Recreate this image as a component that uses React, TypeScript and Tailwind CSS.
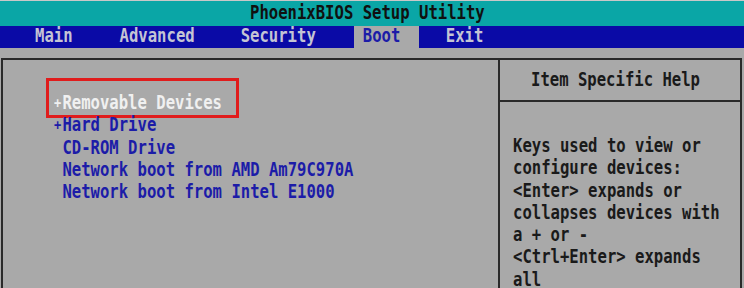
import React from "react";

const font = { fontFamily: '"DejaVu Sans Mono", "Liberation Mono", monospace' };

function Line({ children, className = "" }: { children: React.ReactNode; className?: string }) {
  return (
    <div className={`h-[22.3px] leading-[22.3px] whitespace-pre ${className}`}>
      <span className="inline-block scale-y-[1.2] origin-center">{children}</span>
    </div>
  );
}

function Plus() {
  return <span className="inline-block w-[9.4px] text-center text-[12px] align-[1px]">+</span>;
}

export default function App() {
  const help = [
    "Keys used to view or",
    "configure devices:",
    "<Enter> expands or",
    "collapses devices with",
    "a + or -",
    "<Ctrl+Enter> expands",
    "all",
  ];
  return (
    <div
      className="w-[744px] h-[288px] overflow-hidden bg-[#a9a9a9] flex flex-col text-[15.6px] font-bold"
      style={font}
    >
      <div className="h-[26px] shrink-0 bg-[#0aa6a6] border-t border-[#c8c8c8] flex items-center pl-[250px] text-[#101010]">
        <span className="inline-block scale-y-[1.2]">PhoenixBIOS Setup Utility</span>
      </div>
      <div className="h-[22px] shrink-0 bg-[#0a0aa6] flex items-stretch text-[#c4c4d4]">
        <span className="ml-[35px] flex items-center"><span className="inline-block scale-y-[1.2]">Main</span></span>
        <span className="ml-[47px] flex items-center"><span className="inline-block scale-y-[1.2]">Advanced</span></span>
        <span className="ml-[46px] flex items-center"><span className="inline-block scale-y-[1.2]">Security</span></span>
        <span className="ml-[38px] w-[65px] pl-[9px] bg-[#a9a9a9] text-[#1c1ca8] flex items-center"><span className="inline-block scale-y-[1.2]">Boot</span></span>
        <span className="ml-[27px] flex items-center"><span className="inline-block scale-y-[1.2]">Exit</span></span>
      </div>
      <div className="flex-1 pt-[10px] pl-[1px] pr-[2px]">
        <div className="h-full border-t-2 border-l-2 border-r-2 border-[#2a2a2a] flex">
          <div className="w-[495px] shrink-0 relative pt-[32px] pl-[50px] text-[#1c1ca8]">
            <div className="absolute left-[43px] top-[18px] w-[193px] h-[40px] border-[3px] border-[#e01c1c]" />
            <Line className="text-[#f0f0f0]"><Plus />Removable Devices</Line>
            <Line><Plus />Hard Drive</Line>
            <Line> CD-ROM Drive</Line>
            <Line> Network boot from AMD Am79C970A</Line>
            <Line> Network boot from Intel E1000</Line>
          </div>
          <div className="flex-1 border-l-2 border-[#2a2a2a] flex flex-col text-[#1a1a1a]">
            <div className="h-[42px] shrink-0 border-b-2 border-[#2a2a2a] flex items-center pl-[31px] pt-[2px]">
              <span className="inline-block scale-y-[1.2]">Item Specific Help</span>
            </div>
            <div className="pt-[33px] pl-[13px]">
              {help.map((h) => (
                <Line key={h}>{h}</Line>
              ))}
            </div>
          </div>
        </div>
      </div>
    </div>
  );
}
